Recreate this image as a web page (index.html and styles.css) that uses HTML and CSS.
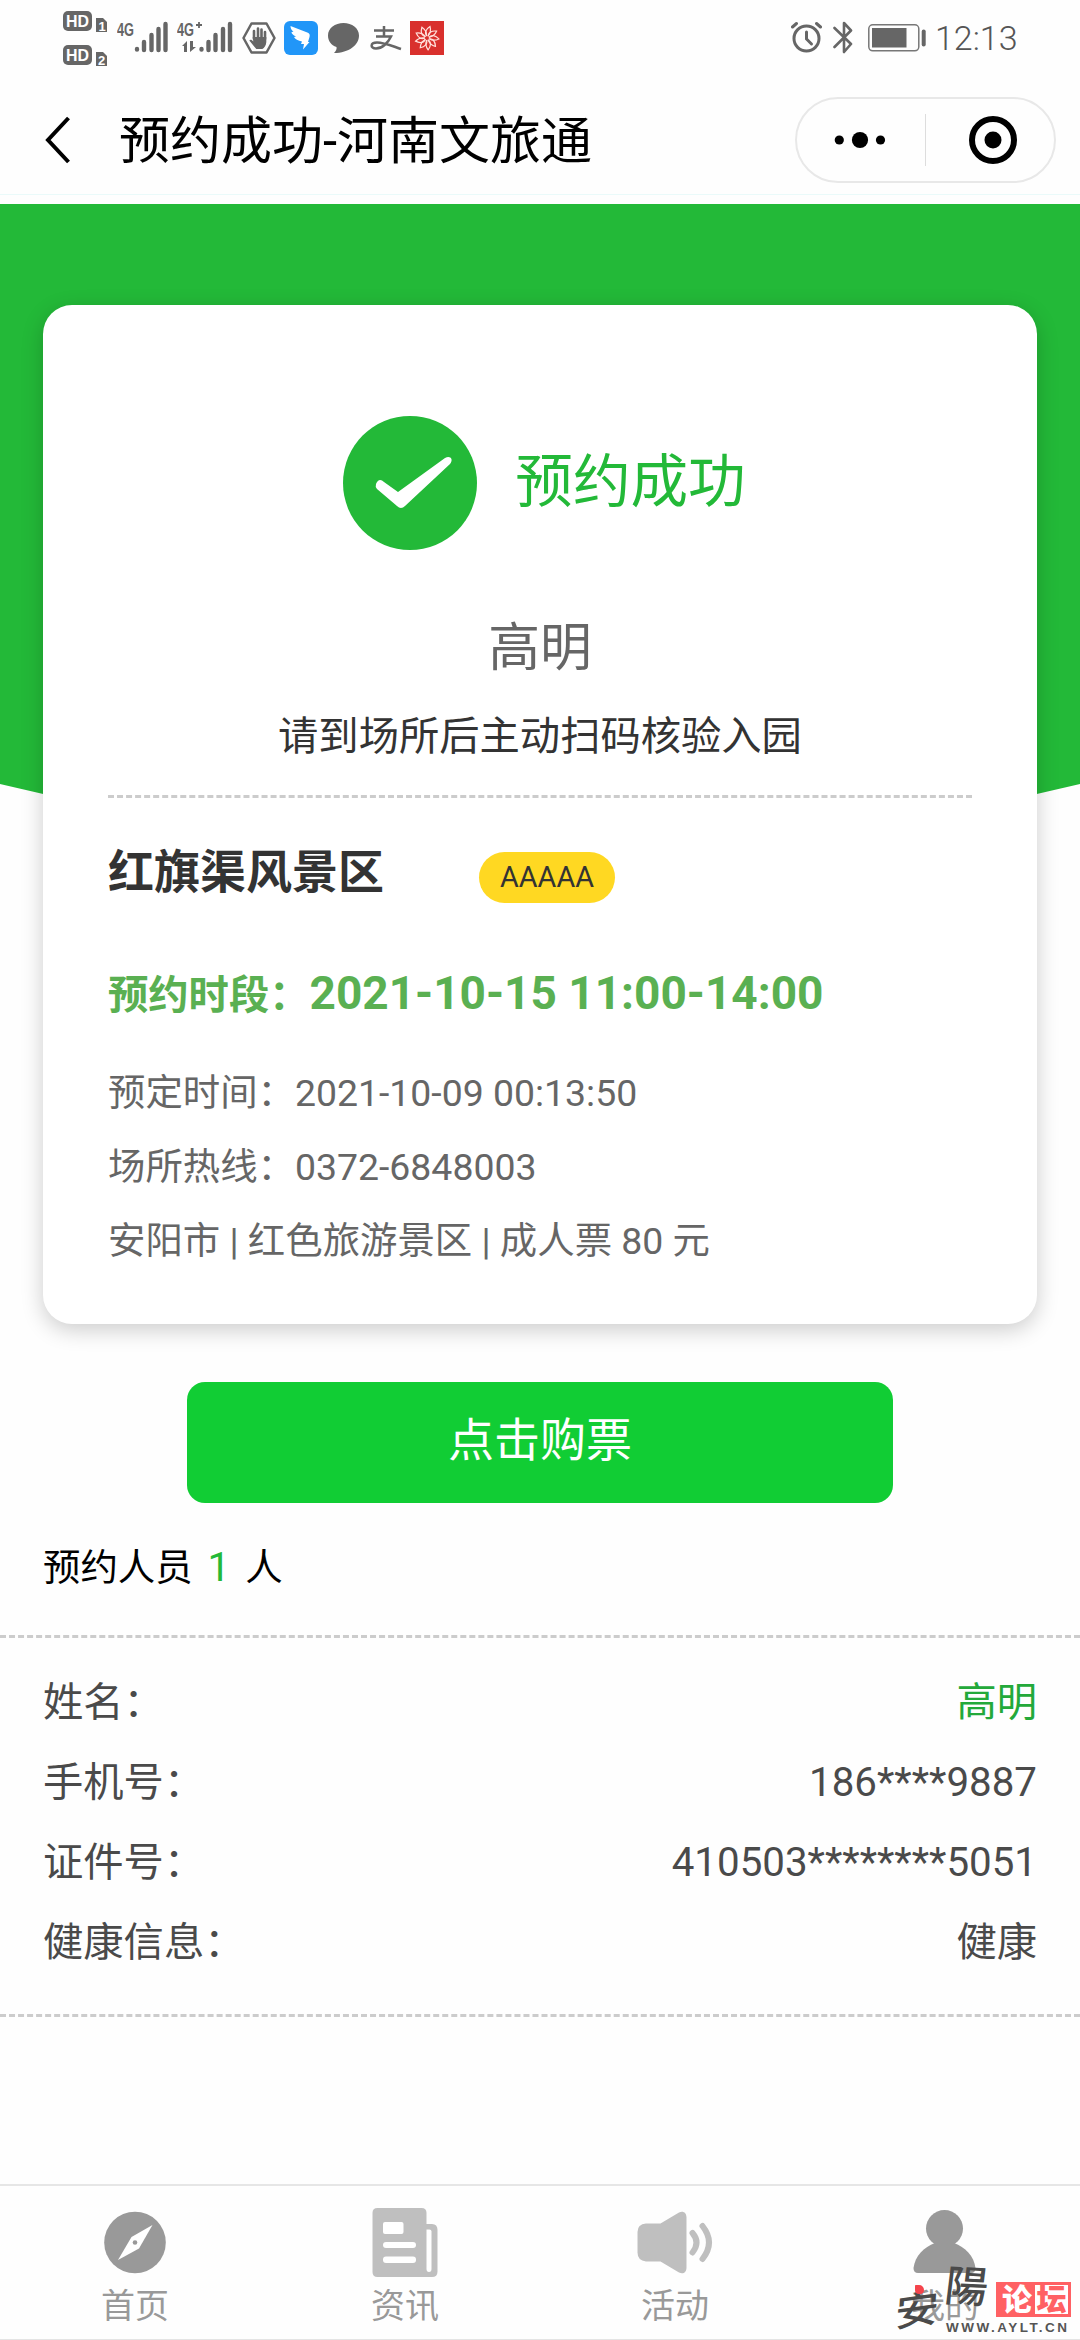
FILE: index.html
```html
<!DOCTYPE html>
<html lang="zh-CN">
<head>
<meta charset="utf-8">
<title>预约成功-河南文旅通</title>
<link rel="stylesheet" href="styles.css">
</head>
<body>
<div class="screen">
  <header class="status">
    <svg class="sim" width="46" height="56" viewBox="0 0 46 56">
      <g fill="#666"><rect width="29" height="20" rx="5"/><path d="M33 7h7l4 4v10H33z"/><rect y="34" width="29" height="20" rx="5"/><path d="M33 41h7l4 4v10H33z"/></g>
      <g class="sim-text"><text x="3" y="16" textLength="23" lengthAdjust="spacingAndGlyphs">HD</text><text x="3" y="50" textLength="23" lengthAdjust="spacingAndGlyphs">HD</text></g>
      <g class="sim-num"><text x="35.500" y="19.500">1</text><text x="35" y="53.500">2</text></g>
    </svg>
    <svg class="signal-a" width="51" height="32" viewBox="0 0 51 32">
      <text class="net" x="0" y="14.500" textLength="17" lengthAdjust="spacingAndGlyphs">4G</text>
      <path d="M20 28v.5M27 21v8M34.500 14v15M41.500 8v21M48.500 3v26" stroke="#666" stroke-width="4.400" stroke-linecap="round"/>
    </svg>
    <svg class="signal-b" width="56" height="32" viewBox="0 0 56 32">
      <text class="net" x="0" y="14.500" textLength="17" lengthAdjust="spacingAndGlyphs">4G</text>
      <path d="M19 4h6M22 1v6" stroke="#666" stroke-width="1.800"/>
      <path d="M10 20v11H7v-6H5zM13 20v11l6-5h-3v-6z" fill="#666"/>
      <path d="M24.500 28v.5M31.500 21v8M38.500 14v15M46 8v21M53 3v26" stroke="#666" stroke-width="4.400" stroke-linecap="round"/>
    </svg>
    <svg class="shield" width="34" height="32" viewBox="0 0 34 32">
      <path d="M9.500 1.500h15L32.500 16l-8 14.500h-15L1.500 16z" fill="none" stroke="#666" stroke-width="2.500" stroke-linejoin="round"/>
      <path d="M12 17V9M16 16V6.500M19.500 16V7.500M23 17v-7" stroke="#666" stroke-width="2.600" stroke-linecap="round"/>
      <path d="M10.700 15h13.600v5c0 3-2 6-4 7h-6l-7-8.500c1-1.500 2.500-1 4 1z" fill="#666"/>
    </svg>
    <svg class="ding" width="34" height="34" viewBox="0 0 34 34">
      <rect width="34" height="34" rx="6" fill="#2196f8"/>
      <path d="M6.500 5L22 11c4 1.500 4 2.500 3.500 5L24 21h1.500L19 28.500l1-5.500h-3l1-2.500c-4-.5-7-2.500-8-4.500l2-.5C9 14 7.500 12.500 7.500 11l2-.2C7.500 9 6.500 7.500 6.500 5z" fill="#fff"/>
    </svg>
    <svg class="bubble" width="31" height="31" viewBox="0 0 31 31">
      <path d="M15.500 0C24 0 31 5 31 12.500 31 22 21 30 6 30c2-2 3-4 2.500-6C3 22 0 18 0 12.500 0 5 7 0 15.500 0z" fill="#666"/>
    </svg>
    <svg class="pay" width="32" height="26" viewBox="0 0 32 26">
      <path d="M4 4.500h20M14 0v10M6 10.500h15C18 17 12 22.500 6 22.500c-6 0-6-6 1-6 7 0 15 3.500 24 6.500" fill="none" stroke="#666" stroke-width="2.500"/>
    </svg>
    <svg class="flower" width="34" height="34" viewBox="-17 -17 34 34">
      <rect x="-17" y="-17" width="34" height="34" fill="#d9302d"/>
      <g fill="none" stroke="#ffe1dc" stroke-width="1.200">
        <path id="petal" d="M0-2C-3-5-1-9 3-11.500 4-8 3-4 1-2"/>
        <use href="#petal" transform="rotate(40)"/><use href="#petal" transform="rotate(80)"/><use href="#petal" transform="rotate(120)"/><use href="#petal" transform="rotate(160)"/><use href="#petal" transform="rotate(200)"/><use href="#petal" transform="rotate(240)"/><use href="#petal" transform="rotate(280)"/><use href="#petal" transform="rotate(320)"/>
      </g>
    </svg>
    <svg class="alarm" width="31" height="32" viewBox="0 0 31 32">
      <g fill="none" stroke="#666" stroke-linecap="round"><circle cx="15.500" cy="17.500" r="12.500" stroke-width="3"/><path d="M15.500 11v7l5 5" stroke-width="3"/><path d="M1.500 6l4-3.500M29.500 6l-4-3.500" stroke-width="3"/></g>
    </svg>
    <svg class="bluetooth" width="20" height="33" viewBox="0 0 20 33">
      <path d="M1.500 7l16.500 16-7 8V2l7 7.500L1.500 26" fill="none" stroke="#666" stroke-width="2.600" stroke-linejoin="round" stroke-linecap="round"/>
    </svg>
    <svg class="battery" width="58" height="28" viewBox="0 0 58 28">
      <rect x=".8" y=".8" width="50" height="26" rx="4" fill="none" stroke="#777" stroke-width="1.500"/><rect x="4" y="4" width="34.500" height="19.500" fill="#666"/><rect x="53.700" y="5.500" width="4" height="17" rx="2" fill="#666"/>
    </svg>
    <span class="clock">12:13</span>
  </header>

  <nav class="nav">
    <svg class="back" width="26" height="48" viewBox="0 0 26 48"><path d="M23.500 2L3 24l20.500 22" fill="none" stroke="#000" stroke-width="4"/></svg>
    <h1 class="nav-title">预约成功-河南文旅通</h1>
    <div class="capsule">
      <svg class="more" width="52" height="18" viewBox="0 0 52 18"><circle cx="5.300" cy="9" r="4.600"/><circle cx="26" cy="9" r="8.100"/><circle cx="46.500" cy="9" r="4.600"/></svg>
      <span class="capsule-line"></span>
      <svg class="target" width="48" height="48" viewBox="0 0 48 48"><circle cx="24" cy="24" r="21" fill="none" stroke="#000" stroke-width="6"/><circle cx="24" cy="24" r="8.500"/></svg>
    </div>
  </nav>

  <main class="main">
    <section class="card">
      <div class="result">
        <svg width="134" height="134" viewBox="0 0 134 134"><circle cx="67" cy="67" r="67" fill="#23b938"/><path d="M33 68c2-5 5-5 8-2l14 10 47-34c5-3 9 1 5 6L62 90q-4 4-8 0L34 73q-2-2-1-5z" fill="#fff"/></svg>
        <span class="result-text">预约成功</span>
      </div>
      <p class="visitor">高明</p>
      <p class="hint">请到场所后主动扫码核验入园</p>
      <hr class="dash">
      <div class="place"><h2 class="place-name">红旗渠风景区</h2><span class="grade">AAAAA</span></div>
      <p class="slot">预约时段：<span class="slot-time">2021-10-15 11:00-14:00</span></p>
      <p class="info">预定时间：2021-10-09 00:13:50</p>
      <p class="info">场所热线：0372-6848003</p>
      <p class="info">安阳市 | 红色旅游景区 | 成人票 80 元</p>
    </section>
    <button class="buy">点击购票</button>
    <p class="people">预约人员<span class="count">1</span>人</p>
    <hr class="dash">
    <dl class="person">
      <div class="row"><dt>姓名：</dt><dd class="name">高明</dd></div>
      <div class="row"><dt>手机号：</dt><dd>186****9887</dd></div>
      <div class="row"><dt>证件号：</dt><dd>410503********5051</dd></div>
      <div class="row"><dt>健康信息：</dt><dd>健康</dd></div>
    </dl>
    <hr class="dash dash-end">
  </main>

  <footer class="tabs">
    <a class="tab">
      <svg width="76" height="70" viewBox="0 0 76 70"><circle cx="38" cy="34.500" r="30.800" fill="#999"/><path d="M55.500 17L42 40.500 21 52l13.500-23z" fill="#fff"/><circle cx="38" cy="34.500" r="2.300" fill="#999"/></svg>
      <span>首页</span>
    </a>
    <a class="tab">
      <svg width="76" height="70" viewBox="0 0 76 70"><path d="M10.500 0h44q5 0 5 5v11H65q5.500 0 5.500 6v41.500q0 5.500-5.500 5.500H10.500q-5 0-5-5V5q0-5 5-5z" fill="#bfbfbf"/><g fill="#fff"><rect x="16" y="14" width="20.500" height="12" rx="2"/><rect x="16" y="34" width="33" height="6" rx="3"/><rect x="16" y="48.500" width="33" height="6.500" rx="3"/><path d="M59.500 21.500h3q2 0 2 2V61q0 3-2.500 3t-2.500-3z"/></g></svg>
      <span>资讯</span>
    </a>
    <a class="tab">
      <svg width="76" height="70" viewBox="0 0 76 70"><path d="M9 15.500h14.500L42 4.500c4-2 7.500 0 7.500 5v50c0 5-3.500 7-7.500 5l-18.500-11H9q-8.500-1-8.500-9V24q0-8 8.500-8.500z" fill="#bfbfbf"/><path d="M55.500 25q8 9.500 0 19.500M65.500 18q13 16.500 0 33" fill="none" stroke="#bfbfbf" stroke-width="6" stroke-linecap="round"/></svg>
      <span>活动</span>
    </a>
    <a class="tab">
      <svg width="76" height="70" viewBox="0 0 76 70"><circle cx="37.500" cy="20.500" r="18.500" fill="#999"/><path d="M28 35h19c11 4 20 13 21.500 25q0 5-4.500 5H11q-4.500 0-4.500-5C8 48 17 39 28 35z" fill="#999"/></svg>
      <span>我的</span>
    </a>
  </footer>

  <div class="watermark">
    <span class="wm-an">安</span><span class="wm-dot"></span><span class="wm-yang">陽</span>
    <span class="wm-box"><b class="wm-lun">论</b><b class="wm-tan">坛</b></span>
    <span class="wm-url">WWW.AYLT.CN</span>
  </div>
</div>
</body>
</html>
```
FILE: styles.css
```css
* { box-sizing: border-box; margin: 0; padding: 0; }
body { background: #fefefe; font-family: Roboto, "Noto Sans CJK SC", sans-serif; color: #333; }
.screen { position: relative; width: 1080px; height: 2340px; display: flex; flex-direction: column; overflow: hidden; border-bottom: 1px solid #e4e4e4; }
svg { display: block; flex: none; }

.status { height: 80px; display: flex; align-items: flex-start; padding-left: 63px; }
.sim { margin-top: 11px; }
.sim-text { font: bold 16px "Liberation Sans", sans-serif; fill: #fff; }
.sim-num { font: bold 13px "Liberation Sans", sans-serif; fill: #fff; }
.net { font: bold 18px "Liberation Sans", sans-serif; fill: #666; }
.signal-a { margin: 21px 0 0 8px; }
.signal-b { margin: 21px 0 0 9px; }
.shield { margin: 22px 0 0 9px; }
.ding { margin: 21px 0 0 8px; }
.bubble { margin: 23px 0 0 10px; }
.pay { margin: 26px 0 0 11px; }
.flower { margin: 21px 0 0 8px; }
.alarm { margin: 21px 0 0 347px; }
.bluetooth { margin: 21px 0 0 11px; }
.battery { margin: 24px 0 0 15px; }
.clock { margin: 18px 0 0 9px; font-size: 34px; line-height: 40px; font-weight: 300; color: #555; }

.nav { height: 115px; display: flex; align-items: center; padding: 5px 24px 0 45px; border-bottom: 1px solid #eafafa; }
.nav-title { margin: 5px 0 0 48px; font-size: 51px; font-weight: 400; line-height: 60px; color: #000; }
.capsule { margin-left: auto; width: 261px; height: 86px; border: 2px solid #e8e8e8; border-radius: 43px; display: flex; align-items: center; padding-left: 37px; }
.capsule-line { width: 1px; height: 52px; background: #ddd; margin: 0 43px 0 39px; }

.main { position: relative; margin-top: 9px; flex: 1; padding-top: 101px; }
.main::before { content: ""; position: absolute; inset: 0 0 auto; height: 720px; background: #23b938; clip-path: polygon(0 0, 100% 0, 100% 580px, 96% 590px, 50% 680px, 4% 590px, 0 580px); }
.card { position: relative; width: 994px; height: 1019px; margin: 0 auto; padding: 111px 65px 0; background: #fff; border-radius: 29px; box-shadow: 0 6px 22px rgba(0, 0, 0, .2); }
.result { display: flex; align-items: center; justify-content: center; gap: 38px; height: 134px; padding-left: 9px; }
.result-text { font-size: 57.6px; line-height: 70px; color: #23b938; margin-top: -1px; }
.visitor { margin-top: 69px; text-align: center; font-size: 51.8px; line-height: 60px; color: #666; }
.hint { margin-top: 34px; text-align: center; font-size: 40.3px; line-height: 48px; }
.dash { border: 0; border-top: 3px dashed #ccc; }
.card .dash { margin-top: 34px; }
.place { margin-top: 43px; display: flex; align-items: flex-start; }
.place-name { margin-top: 1px; font-size: 46px; line-height: 60px; font-weight: 700; }
.grade { margin: 11px 0 0 95px; width: 136px; height: 51px; border-radius: 26px; background: #ffd822; text-align: center; font-size: 28.8px; line-height: 50px; }
.slot { margin-top: 60px; font-size: 40.3px; line-height: 60px; font-weight: 700; color: #5ab052; }
.slot-time { font-size: 46px; }
.info { font-size: 37.4px; line-height: 74px; color: #666; }
.slot + .info { margin-top: 30px; }
.buy { display: block; width: 706px; height: 121px; margin: 58px auto 0; border: 0; border-radius: 18px; background: #11cd34; color: #fff; font: 400 46px/60px Roboto, "Noto Sans CJK SC", sans-serif; padding-bottom: 6px; }
.people { margin: 35px 0 0 43px; font-size: 37.4px; line-height: 60px; color: #000; }
.count { margin: 0 15px; font-size: 40.3px; color: #23b938; }
.main > .dash { margin-top: 37px; }
.main > .dash-end { margin-top: 31px; }
.person { padding: 25px 43px 0; font-size: 40.3px; line-height: 80px; color: #4a4a4a; }
.row { display: flex; justify-content: space-between; }
.name { color: #23a93a; }

.tabs { height: 155px; border-top: 2px solid #e6e6e6; display: grid; grid-template-columns: repeat(4, 1fr); }
.tab { display: flex; flex-direction: column; align-items: center; padding-top: 22px; font-size: 34px; line-height: 46px; color: #999; }
.tab span { margin-top: 5px; }

.watermark { position: absolute; left: 890px; top: 2260px; width: 190px; height: 80px; color: #4a4a4a; }
.watermark > * { position: absolute; }
.wm-an { left: 5px; top: 28px; font-size: 44px; line-height: 46px; font-weight: 500; transform: rotate(-8deg) skewX(-12deg) scaleY(.86); }
.wm-dot { left: 25px; top: 25px; width: 9px; height: 9px; background: #f4444c; border-radius: 1px 6px 5px 5px; }
.wm-yang { left: 55px; top: 5px; font-size: 43px; line-height: 44px; font-weight: 500; transform: skewX(-4deg) rotate(3deg); }
.wm-box { left: 106px; top: 22px; width: 75px; height: 35px; padding: 3px; display: flex; background: #ff6164; font-size: 30px; line-height: 29px; font-weight: 900; }
.wm-lun { width: 36px; text-align: center; color: #fff; }
.wm-tan { width: 33px; text-align: center; color: #ff6164; background: #fff; }
.wm-url { left: 56px; top: 60px; font: bold 13.5px/16px "Liberation Sans", sans-serif; letter-spacing: 2.5px; color: #555; }
```
